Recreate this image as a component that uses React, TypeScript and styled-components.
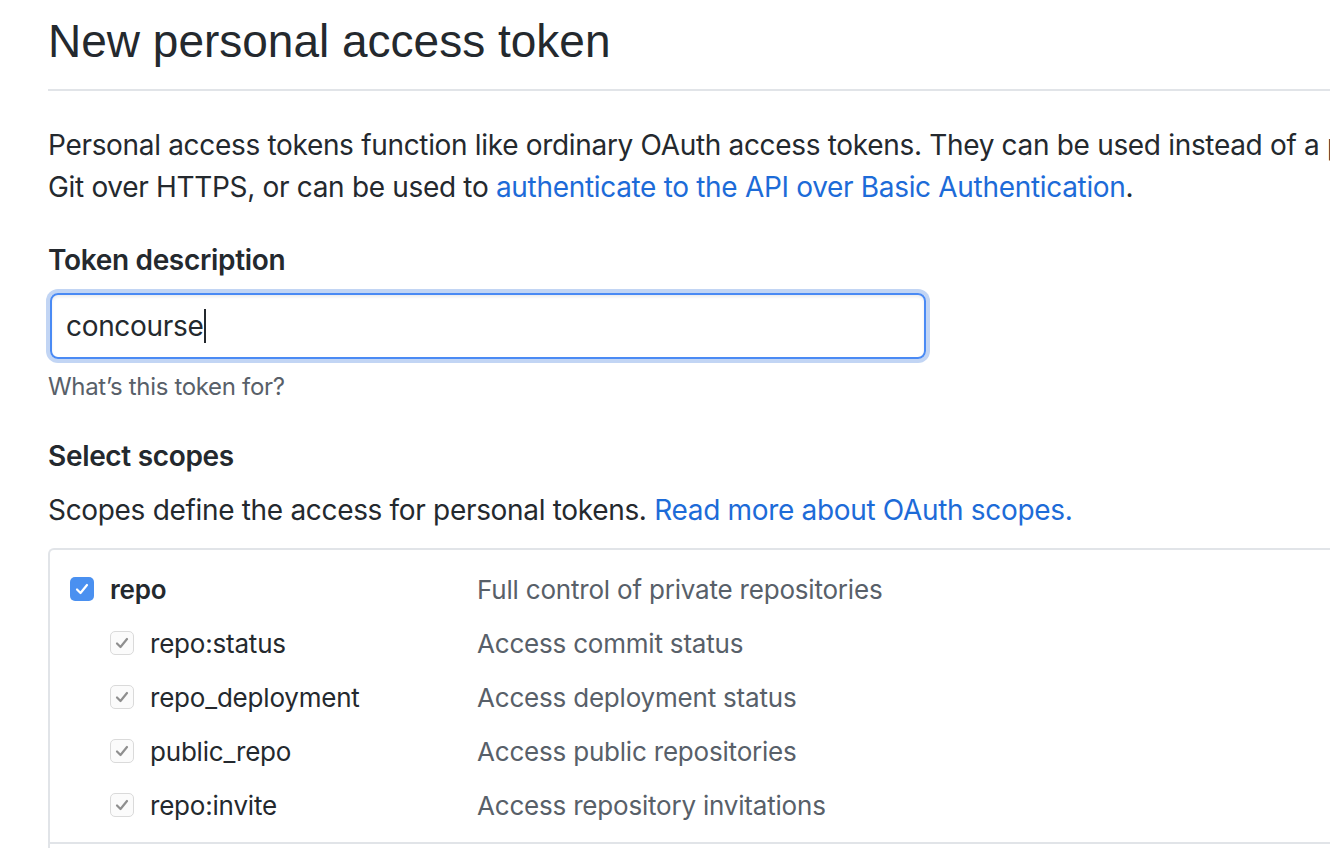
import * as React from "react";
import styled, { createGlobalStyle } from "styled-components";

const GlobalStyle = createGlobalStyle`
  html, body {
    margin: 0;
    padding: 0;
    background: #ffffff;
    overflow: hidden;
  }
  body {
    font-family: Inter, "Noto Sans", "Liberation Sans", sans-serif;
    letter-spacing: -0.32px;
    color: #24292e;
  }
`;

const Page = styled.div`
  width: 1800px;
  padding-left: 48px;
  box-sizing: border-box;
`;

const Title = styled.h1`
  margin: 0;
  padding: 11px 0 18px;
  font-family: "Liberation Sans", Arial, sans-serif;
  font-size: 46px;
  line-height: 60px;
  font-weight: 400;
  letter-spacing: 0;
  color: #24292e;
  border-bottom: 2px solid #e1e4e8;
`;

const Intro = styled.p`
  margin: 33px 0 0;
  font-size: 28px;
  line-height: 42px;
`;

const Link = styled.a`
  color: #1d6bd8;
  text-decoration: none;
`;

const FormGroup = styled.div`
  margin-top: 31px;
`;

const Label = styled.div`
  font-size: 28px;
  line-height: 42px;
  font-weight: 600;
`;

const FakeInput = styled.div`
  margin-top: 12px;
  margin-left: 2px;
  width: 876px;
  height: 66px;
  box-sizing: border-box;
  border: 2px solid #4a8af4;
  border-radius: 8px;
  box-shadow: 0 0 0 4px #c2d5f4, inset 0 2px 3px rgba(27, 31, 35, 0.08);
  display: flex;
  align-items: center;
  padding-left: 14px;
  font-size: 28px;
  color: #24292e;
`;

const Caret = styled.span`
  display: inline-block;
  width: 2px;
  height: 34px;
  margin-left: 1px;
  background: #24292e;
`;

const Note = styled.div`
  margin-top: 11px;
  font-size: 24px;
  line-height: 34px;
  color: #586069;
`;

const SectionHeading = styled.h3`
  margin: 31px 0 0;
  font-size: 28px;
  line-height: 42px;
  font-weight: 600;
`;

const SectionText = styled.p`
  margin: 12px 0 0;
  font-size: 28px;
  line-height: 42px;
`;

const ScopeBox = styled.div`
  margin-top: 17px;
  border: 2px solid #e1e4e8;
  border-right: none;
  border-radius: 6px 0 0 6px;
  height: 400px;
`;

const ScopeGroup = styled.div`
  padding: 12px 0 10px 20px;
  border-bottom: 2px solid #e1e4e8;
`;

const Row = styled.div`
  display: grid;
  grid-template-columns: 407px 1fr;
  align-items: center;
  height: 54px;
  font-size: 26px;
  letter-spacing: -0.2px;
`;

const Name = styled.div<{ $sub?: boolean }>`
  display: flex;
  align-items: center;
  gap: 16px;
  padding-left: ${(p) => (p.$sub ? "40px" : "0")};
  font-weight: ${(p) => (p.$sub ? 400 : 600)};
  color: #24292e;
`;

const Desc = styled.div`
  color: #586069;
`;

const Box = styled.span<{ $on?: boolean }>`
  width: 24px;
  height: 24px;
  box-sizing: border-box;
  border-radius: 5px;
  display: inline-flex;
  align-items: center;
  justify-content: center;
  flex-shrink: 0;
  background: ${(p) => (p.$on ? "#4a90f0" : "#fbfbfb")};
  border: ${(p) => (p.$on ? "none" : "1.5px solid #dadada")};
`;

const Check = ({ on }: { on?: boolean }) => (
  <Box $on={on}>
    <svg width="18" height="18" viewBox="0 0 18 18">
      <path
        d="M4 9.5 L7.5 13 L14 5"
        fill="none"
        stroke={on ? "#ffffff" : "#8f8f8f"}
        strokeWidth="2.2"
        strokeLinecap="round"
        strokeLinejoin="round"
      />
    </svg>
  </Box>
);

const scopes = [
  { name: "repo:status", desc: "Access commit status" },
  { name: "repo_deployment", desc: "Access deployment status" },
  { name: "public_repo", desc: "Access public repositories" },
  { name: "repo:invite", desc: "Access repository invitations" },
];

export default function App() {
  return (
    <>
      <GlobalStyle />
      <Page>
        <Title>New personal access token</Title>
        <Intro>
          Personal access tokens function like ordinary OAuth access tokens. They can be used
          instead of a password for
          <br />
          Git over HTTPS, or can be used to{" "}
          <Link href="#">authenticate to the API over Basic Authentication</Link>.
        </Intro>
        <FormGroup>
          <Label>Token description</Label>
          <FakeInput>
            concourse
            <Caret />
          </FakeInput>
          <Note>What’s this token for?</Note>
        </FormGroup>
        <SectionHeading>Select scopes</SectionHeading>
        <SectionText>
          Scopes define the access for personal tokens.{" "}
          <Link href="#">Read more about OAuth scopes.</Link>
        </SectionText>
        <ScopeBox>
          <ScopeGroup>
            <Row>
              <Name>
                <Check on />
                repo
              </Name>
              <Desc>Full control of private repositories</Desc>
            </Row>
            {scopes.map((s) => (
              <Row key={s.name}>
                <Name $sub>
                  <Check />
                  {s.name}
                </Name>
                <Desc>{s.desc}</Desc>
              </Row>
            ))}
          </ScopeGroup>
        </ScopeBox>
      </Page>
    </>
  );
}
